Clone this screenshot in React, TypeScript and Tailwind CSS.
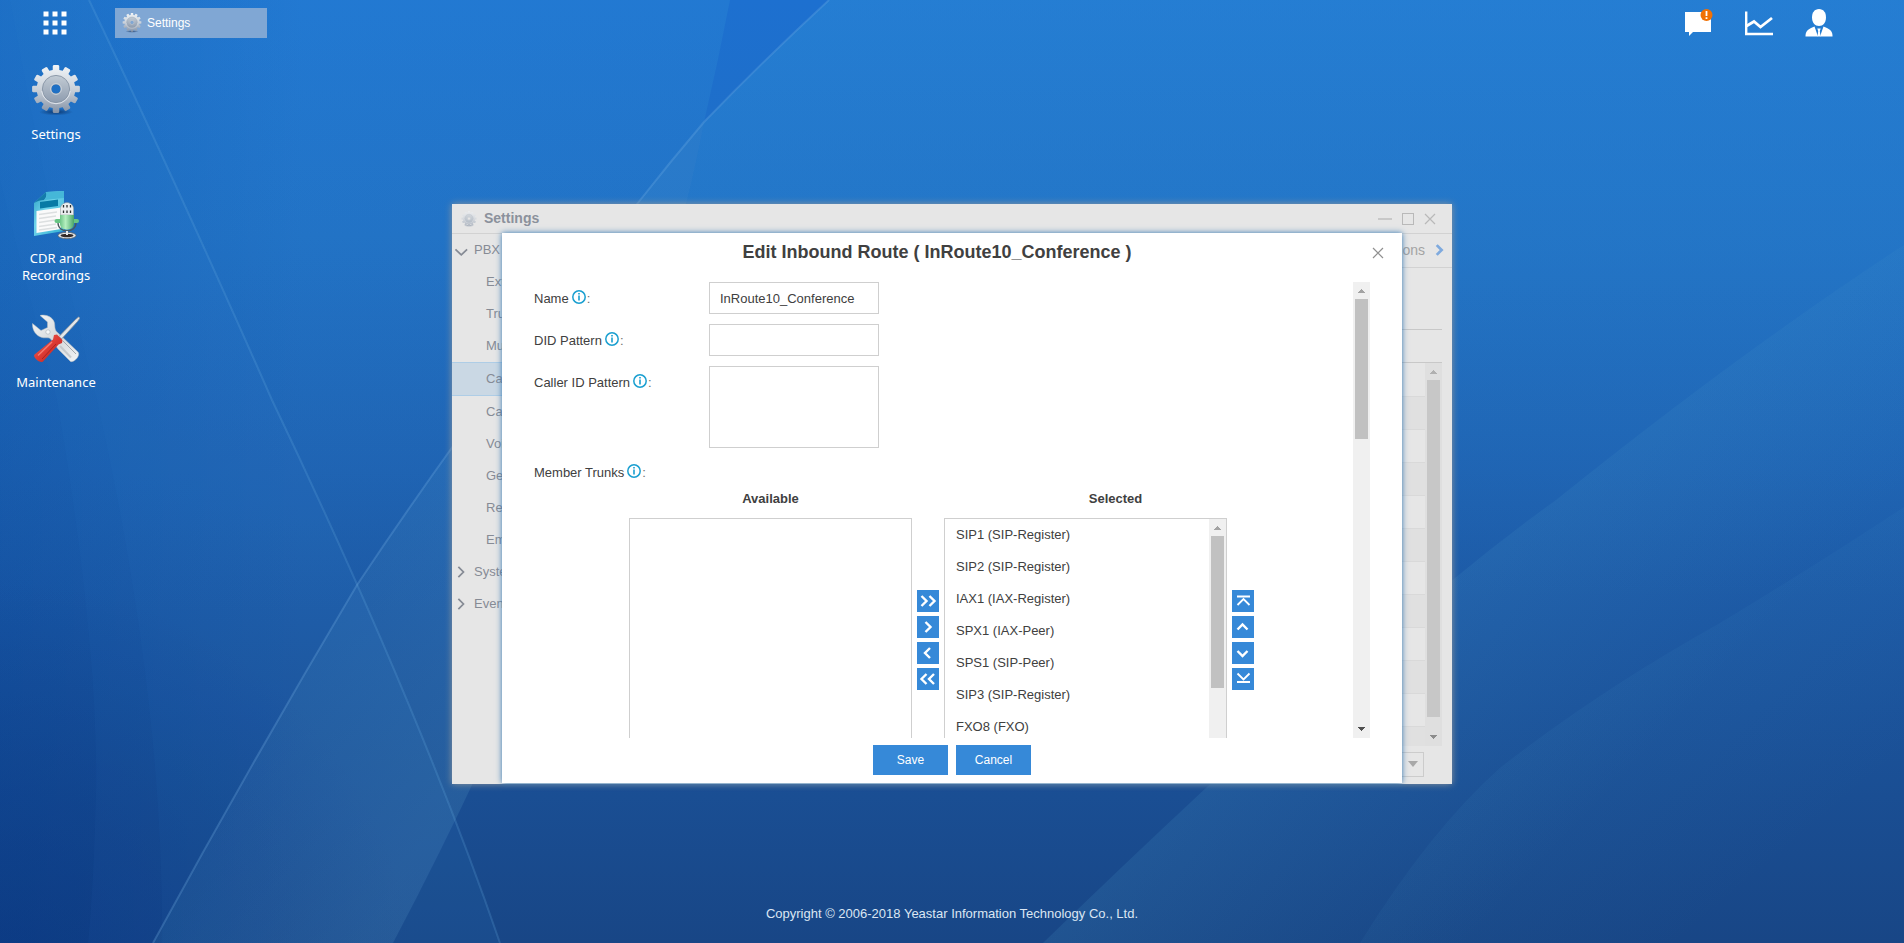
import React, { useId } from "react";

const GEAR_TEETH = 12;

function gearOutline(): string {
  const points: string[] = [];
  const step = (Math.PI * 2) / GEAR_TEETH;
  const at = (radius: number, angle: number) =>
    `${(radius * Math.sin(angle)).toFixed(2)} ${(-radius * Math.cos(angle)).toFixed(2)}`;
  for (let i = 0; i < GEAR_TEETH; i++) {
    const a = i * step;
    points.push(at(19.4, a - 0.17), at(23.2, a - 0.14), at(24, a - 0.1));
    points.push(at(24, a + 0.1), at(23.2, a + 0.14), at(19.4, a + 0.17));
  }
  return `M${points.join("L")}Z`;
}

const GEAR_PATH = gearOutline();
const HOLE = "M5 0A5 5 0 1 0 -5 0A5 5 0 1 0 5 0Z";

function GearIcon({ className }: { className: string }) {
  const id = useId();
  return (
    <svg viewBox="-24 -24 48 51" className={className} aria-hidden="true">
      <defs>
        <linearGradient id={`${id}a`} gradientUnits="userSpaceOnUse" x1="0" y1="-24" x2="0" y2="24">
          <stop offset="0" stopColor="#f1f4f7" />
          <stop offset="0.5" stopColor="#cbd2da" />
          <stop offset="1" stopColor="#8492a6" />
        </linearGradient>
        <linearGradient id={`${id}b`} gradientUnits="userSpaceOnUse" x1="0" y1="-14" x2="0" y2="14">
          <stop offset="0" stopColor="#c3ccd5" />
          <stop offset="1" stopColor="#8d9bae" />
        </linearGradient>
        <radialGradient id={`${id}c`}>
          <stop offset="0" stopColor="#052350" stopOpacity="0.7" />
          <stop offset="1" stopColor="#052350" stopOpacity="0" />
        </radialGradient>
      </defs>
      <ellipse cx="0" cy="23" rx="17" ry="3.5" fill={`url(#${id}c)`} />
      <path d={GEAR_PATH + HOLE} fillRule="evenodd" fill={`url(#${id}a)`} />
      <path d={"M13.6 0A13.6 13.6 0 1 0 -13.6 0A13.6 13.6 0 1 0 13.6 0Z" + HOLE} fillRule="evenodd" fill={`url(#${id}b)`} stroke="#8794a5" strokeWidth="0.9" />
      <path d="M-14.3 2A14.4 14.4 0 0 0 14.3 2" fill="none" stroke="#e6ebf0" strokeWidth="0.9" />
      <circle r="5.4" fill="none" stroke="#dbe1e7" strokeWidth="0.8" />
    </svg>
  );
}

function RecordingsIcon() {
  return (
    <svg viewBox="0 0 48 50" className="h-[50px] w-12" aria-hidden="true">
      <defs>
        <linearGradient id="page" x1="0" y1="0" x2="1" y2="1">
          <stop offset="0" stopColor="#2b9fc6" />
          <stop offset="0.4" stopColor="#6fd3ea" />
          <stop offset="1" stopColor="#2fb0d2" />
        </linearGradient>
        <linearGradient id="mic" x1="0" y1="0" x2="1" y2="0">
          <stop offset="0" stopColor="#6fc588" />
          <stop offset="0.4" stopColor="#b5efbf" />
          <stop offset="1" stopColor="#4aa568" />
        </linearGradient>
      </defs>
      <path d="M2 13L14 2L32 1V41L2 46Z" fill="url(#page)" />
      <path d="M2 13L14 2C15 5 14 8 12 10C9 10 5 11 2 13Z" fill="#147bab" />
      <path d="M14 2L32 1V8L12 10C15 8 15 5 14 2Z" fill="#45b7d8" />
      <path d="M8 12L26 9.500V16L8 18.500Z" fill="#087aa5" />
      <path d="M4.500 21L29 17.500V39L4.500 43Z" fill="#fafafa" />
      <path d="M7 24.500L25 22M7 28.500L24 26M7 32.500L23 30M7 36.500L24 34M7 40L25 37.500" stroke="#dcdfe0" strokeWidth="1.400" />
      <ellipse cx="35" cy="45.500" rx="9" ry="3.200" fill="#e9ebec" stroke="#5c6266" strokeWidth="0.800" />
      <ellipse cx="35" cy="45.500" rx="6.500" ry="1.800" fill="#332a28" />
      <path d="M26 33C26 43.500 44 43.500 44 33" fill="none" stroke="#4b585c" strokeWidth="1.300" />
      <path d="M35 41V45" stroke="#e9ebec" strokeWidth="2" />
      <rect x="22.500" y="29" width="24.500" height="4" rx="2" fill="#67c583" />
      <path d="M28.500 19C28.500 10.500 41.500 10.500 41.500 19V25H28.500Z" fill="#eceff0" stroke="#9aa3a6" strokeWidth="0.600" />
      <path d="M31.500 15V17.500M35 15V17.500M38.500 15V17.500M31.500 20.500V23M35 20.500V23M38.500 20.500V23" stroke="#2c3032" strokeWidth="1.300" />
      <path d="M28 25H42V34C42 41.500 28 41.500 28 34Z" fill="url(#mic)" />
    </svg>
  );
}

function ToolsIcon() {
  return (
    <svg viewBox="0 0 48 50" className="h-[50px] w-12" aria-hidden="true">
      <defs>
        <linearGradient id="steel" x1="0" y1="0" x2="1" y2="1">
          <stop offset="0" stopColor="#f7f8f9" />
          <stop offset="0.5" stopColor="#d4d8db" />
          <stop offset="1" stopColor="#f3f4f5" />
        </linearGradient>
        <linearGradient id="grip" x1="0" y1="0" x2="1" y2="1">
          <stop offset="0" stopColor="#f46a5c" />
          <stop offset="0.500" stopColor="#dc3a33" />
          <stop offset="1" stopColor="#b3211f" />
        </linearGradient>
      </defs>
      <path d="M8 1.500C14 0 21 3 22.500 9C23 12 22.500 14.500 24 17L46 38C49 41.500 42 49 38.500 47.500L26 35L19.500 26C17 22.500 14 24.500 10 23.500C4 22 0 16 0.500 9.500L9 16.500L15.500 13.500L15.500 8Z" fill="url(#steel)" stroke="#b4babf" strokeWidth="0.500" />
      <circle cx="16" cy="18" r="2.200" fill="#f8f9fa" stroke="#aab1b7" strokeWidth="0.600" />
      <path d="M31 27L44 40" stroke="#a4a9ad" strokeWidth="1" />
      <path d="M28 32L39 43.500" stroke="#c6cacd" strokeWidth="2" />
      <path d="M27 22.500L43.500 5.500L46.500 3L48 4L45.500 7.500L29.500 25Z" fill="#e3e6e9" stroke="#868f98" strokeWidth="0.800" />
      <path d="M22 21L25 20.500L30.500 26L30 29L26.500 30.500L11 47.500C8.500 50 0 43 2.500 40.500L21 25.500Z" fill="url(#grip)" />
      <path d="M20 28L6 41.500" stroke="#f77c70" strokeWidth="1.400" />
      <path d="M24 30L10 45" stroke="#a8241f" strokeWidth="1" />
    </svg>
  );
}

function Wallpaper() {
  return (
    <svg viewBox="0 0 1904 943" preserveAspectRatio="none" className="absolute inset-0 h-full w-full" aria-hidden="true">
      <defs>
        <linearGradient id="sky" x1="0" y1="0" x2="0" y2="1">
          <stop offset="0" stopColor="#1d70d0" />
          <stop offset="0.25" stopColor="#1f6dc3" />
          <stop offset="0.5" stopColor="#1e61b1" />
          <stop offset="0.75" stopColor="#1b539b" />
          <stop offset="1" stopColor="#184686" />
        </linearGradient>
        <linearGradient id="shade" x1="0" y1="0" x2="1" y2="0">
          <stop offset="0" stopColor="#004099" stopOpacity="0.26" />
          <stop offset="0.16" stopColor="#004099" stopOpacity="0" />
        </linearGradient>
        <radialGradient id="corner" gradientUnits="userSpaceOnUse" cx="0" cy="1000" r="420">
          <stop offset="0" stopColor="#05307c" stopOpacity="0.5" />
          <stop offset="1" stopColor="#05307c" stopOpacity="0" />
        </radialGradient>
        <linearGradient id="left" gradientUnits="userSpaceOnUse" x1="450" y1="790" x2="180" y2="640">
          <stop offset="0" stopColor="#5a9fc8" stopOpacity="0.19" />
          <stop offset="1" stopColor="#5a9fc8" stopOpacity="0.05" />
        </linearGradient>
        <linearGradient id="leftTop" gradientUnits="userSpaceOnUse" x1="0" y1="0" x2="0" y2="620">
          <stop offset="0" stopColor="#3aa2da" stopOpacity="0.18" />
          <stop offset="1" stopColor="#3aa2da" stopOpacity="0" />
        </linearGradient>
        <linearGradient id="top" gradientUnits="userSpaceOnUse" x1="0" y1="0" x2="0" y2="600">
          <stop offset="0" stopColor="#3aa2da" stopOpacity="0.27" />
          <stop offset="1" stopColor="#3aa2da" stopOpacity="0" />
        </linearGradient>
        <linearGradient id="right" gradientUnits="userSpaceOnUse" x1="1290" y1="690" x2="1510" y2="900">
          <stop offset="0" stopColor="#4f9fcb" stopOpacity="0.15" />
          <stop offset="1" stopColor="#4f9fcb" stopOpacity="0" />
        </linearGradient>
        <linearGradient id="right2" gradientUnits="userSpaceOnUse" x1="1600" y1="690" x2="1760" y2="880">
          <stop offset="0" stopColor="#4fa3cf" stopOpacity="0.07" />
          <stop offset="1" stopColor="#4fa3cf" stopOpacity="0" />
        </linearGradient>
      </defs>
      <rect width="1904" height="943" fill="url(#sky)" />
      <rect width="1904" height="943" fill="url(#shade)" />
      <rect width="600" height="943" fill="url(#corner)" />
      <path d="M829 0Q766 58 704 122Q697 160 686 203L620 600H1904V0Z" fill="url(#top)" />
      <path d="M0 0H730Q718 62 704 122Q697 160 686 203L560 620H0Z" fill="url(#leftTop)" />
      <path d="M704 122Q670 162 637 204H686Q697 160 704 122Z" fill="#5aa5cf" fillOpacity="0.13" />
      <path d="M637 204Q480 400 357 585Q250 765 153 943H393Q590 570 686 203Z" fill="url(#left)" />
      <path d="M1043 943Q1120 868 1207 787Q1330 680 1455 578Q1506 536 1556 500Q1740 352 1904 245V943Z" fill="url(#right)" />
      <path d="M1360 943Q1430 830 1501 767Q1600 690 1720 623Q1824 560 1904 507V943Z" fill="url(#right2)" />
      <path d="M57 400Q98 640 96 790Q94 880 88 943H500Q420 710 272 400Q175 180 89 0H0V180Q30 300 57 400Z" fill="#3a8fd0" fillOpacity="0.05" />
      <path d="M10 0Q50 220 97 400Q164 700 162 943H500Q420 710 272 400Q175 180 89 0Z" fill="#3a8fd0" fillOpacity="0.05" />
      <path d="M89 0Q175 180 272 400Q420 710 500 943" fill="none" stroke="#6fb0e4" strokeOpacity="0.22" strokeWidth="2" />
      <path d="M829 0Q766 58 704 122Q670 162 637 204Q480 400 357 585Q250 765 153 943" fill="none" stroke="#7ab6e6" strokeOpacity="0.26" strokeWidth="2" />
    </svg>
  );
}

function Chevron({ d, className }: { d: string; className: string }) {
  return (
    <svg viewBox="0 0 22 22" className={className} fill="none" stroke="currentColor" aria-hidden="true">
      <path d={d} />
    </svg>
  );
}

function CloseMark({ className }: { className: string }) {
  return (
    <svg viewBox="0 0 12 12" className={className} fill="none" stroke="currentColor" strokeWidth="1.200" aria-hidden="true">
      <path d="M1 1L11 11M11 1L1 11" />
    </svg>
  );
}

function ScrollArrow({ down = false, className }: { down?: boolean; className: string }) {
  return (
    <svg viewBox="0 0 17 17" className={`h-[17px] w-[17px] shrink-0 ${className}`} fill="currentColor" shapeRendering="crispEdges" aria-hidden="true">
      <path d={down ? "M5 6H12L8.500 10Z" : "M5 11H12L8.500 7Z"} />
    </svg>
  );
}

function InfoIcon() {
  return (
    <svg viewBox="0 0 14 14" className="mb-1 ml-[3px] h-[14px] w-[14px]" aria-hidden="true">
      <circle cx="7" cy="7" r="6.200" fill="#fff" stroke="#1a9fd0" strokeWidth="1.500" />
      <path d="M7 3V4.600M7 5.600V10.600" stroke="#1a9fd0" strokeWidth="1.600" />
    </svg>
  );
}

function FieldLabel({ htmlFor, children }: { htmlFor: string; children: React.ReactNode }) {
  return (
    <label htmlFor={htmlFor} className="flex h-[34px] w-[175px] shrink-0 items-center">
      {children}
      <InfoIcon />
      <span className="ml-px text-[#707070]">:</span>
    </label>
  );
}

function MoveButton({ label, d, thin = false }: { label: string; d: string; thin?: boolean }) {
  return (
    <button type="button" aria-label={label} className="block h-[22px] w-[22px] bg-[#3689d8] text-white">
      <Chevron d={d} className={thin ? "h-full w-full stroke-[1.8px]" : "h-full w-full stroke-[2.4px]"} />
    </button>
  );
}

const navItems = [
  { name: "Ext" },
  { name: "Trunks" },
  { name: "Multi" },
  { name: "Call", active: true },
  { name: "Calls" },
  { name: "Voice" },
  { name: "General" },
  { name: "Rec" },
  { name: "Emer" },
];
const trunks = ["SIP1 (SIP-Register)", "SIP2 (SIP-Register)", "IAX1 (IAX-Register)", "SPX1 (IAX-Peer)", "SPS1 (SIP-Peer)", "SIP3 (SIP-Register)", "FXO8 (FXO)"];
const gridRows = Array.from({ length: 12 }, (_, i) => i);

function TopBar() {
  return (
    <header className="flex h-[46px] items-center pr-[71px] pl-[43px] text-white">
      <button type="button" aria-label="Main menu" className="h-6 w-6">
        <svg viewBox="0 0 24 24" fill="currentColor" className="h-full w-full">
          {[0, 9, 18].map((x) => [0, 9, 18].map((y) => <rect key={`${x}-${y}`} x={x + 0.5} y={y + 0.5} width="5" height="5" />))}
        </svg>
      </button>
      <button type="button" className="ml-12 flex h-[30px] w-[152px] items-center bg-[#80a7d4] pl-[7px] text-[12px]">
        <GearIcon className="mr-[5px] h-5 w-5" />
        Settings
      </button>
      <div className="ml-auto flex items-center gap-8">
        <button type="button" aria-label="Notifications" className="h-7 w-7">
          <svg viewBox="0 0 28 28" className="h-full w-full">
            <path d="M0 3H26V23H8L4 27V23H0Z" fill="#fff" />
            <circle cx="21.500" cy="6" r="6" fill="#f07106" />
            <path d="M21.500 2V7M21.500 8.300V10" stroke="#fff" strokeWidth="1.800" />
          </svg>
        </button>
        <button type="button" aria-label="Resource monitor" className="h-7 w-7">
          <svg viewBox="0 0 28 28" className="h-full w-full" fill="none" stroke="#fff">
            <path d="M1.200 2.500V25H28" strokeWidth="2.400" />
            <path d="M1.500 17L9 12.500L15.500 18L27 9" strokeWidth="2.800" />
          </svg>
        </button>
        <button type="button" aria-label="Account" className="h-7 w-7">
          <svg viewBox="0 0 28 28" className="h-full w-full" fill="#fff">
            <path d="M14 0C18.500 0 21 3.500 21 8.500C21 13.500 18 17 14 17S7 13.500 7 8.500C7 3.500 9.500 0 14 0Z" />
            <path d="M9.500 17.500L13 27.500H0.500C0.500 22 2.500 20.500 9.500 17.500Z" />
            <path d="M18.500 17.500L15 27.500H27.500C27.500 22 25.500 20.500 18.500 17.500Z" />
            <path d="M12.300 19.500H15.700L14.800 22L15.500 27.500H12.500L13.200 22Z" />
          </svg>
        </button>
      </div>
    </header>
  );
}

function Shortcuts() {
  const items = [
    { name: "Settings", icon: <GearIcon className="h-[51px] w-12" /> },
    { name: "CDR and Recordings", icon: <RecordingsIcon /> },
    { name: "Maintenance", icon: <ToolsIcon /> },
  ];
  return (
    <nav className="flex w-[112px] flex-col pt-[19px] font-['Noto_Sans','Open_Sans',sans-serif] text-[13px] leading-[17px] text-white">
      {items.map((item) => (
        <a key={item.name} href="#" className="flex h-[124px] flex-col items-center px-3 text-center">
          <span className="mb-[10px] flex h-[51px] items-center">{item.icon}</span>
          {item.name}
        </a>
      ))}
    </nav>
  );
}

function EditDialog() {
  return (
    <section role="dialog" aria-labelledby="dialog-title" className="absolute top-[29px] left-[50px] flex h-[550px] w-[900px] flex-col bg-white text-[#404040] shadow-[0_0_6px_#2f74b0]">
      <div className="flex h-[49px] shrink-0 items-start pr-[18px]">
        <h2 id="dialog-title" className="grow pt-[7px] text-center text-[18px] leading-6 font-bold">
          Edit Inbound Route ( InRoute10_Conference )
        </h2>
        <button type="button" aria-label="Close dialog" className="mt-[14px] text-[#909090]">
          <CloseMark className="h-3 w-3" />
        </button>
      </div>
      <div className="mx-8 flex h-[456px] shrink-0 overflow-hidden">
        <form className="min-w-0 grow">
          <div className="mb-2 flex h-[34px]">
            <FieldLabel htmlFor="name">Name</FieldLabel>
            <input id="name" defaultValue="InRoute10_Conference" className="h-8 w-[170px] border border-[#cfcfcf] px-[10px] outline-none" />
          </div>
          <div className="mb-2 flex h-[34px]">
            <FieldLabel htmlFor="did">DID Pattern</FieldLabel>
            <input id="did" className="h-8 w-[170px] border border-[#cfcfcf] px-[10px] outline-none" />
          </div>
          <div className="mb-2 flex">
            <FieldLabel htmlFor="caller">Caller ID Pattern</FieldLabel>
            <textarea id="caller" className="h-[82px] w-[170px] resize-none border border-[#cfcfcf] px-[10px] outline-none" />
          </div>
          <FieldLabel htmlFor="trunks">Member Trunks</FieldLabel>
          <div className="ml-[95px] grid grid-cols-[283px_32px_343px]">
            <h3 className="mb-[10px] text-center leading-[18px] font-bold">Available</h3>
            <span />
            <h3 className="mb-[10px] text-center leading-[18px] font-bold">Selected</h3>
            <ul aria-label="Available" className="h-[244px] border border-[#cfcfcf]" />
            <div className="flex flex-col items-center justify-center gap-1">
              <MoveButton label="Add all" d="M4.500 6L9.500 11L4.500 16M12.500 6L17.500 11L12.500 16" />
              <MoveButton label="Add" d="M8.500 6L13.500 11L8.500 16" />
              <MoveButton label="Remove" d="M13 6L8 11L13 16" />
              <MoveButton label="Remove all" d="M9.500 6L4.500 11L9.500 16M17 6L12 11L17 16" />
            </div>
            <div className="flex items-center gap-[5px]">
              <div className="flex h-[244px] w-[283px] border border-[#cfcfcf]">
                <ul id="trunks" className="grow pl-[11px] leading-8">
                  {trunks.map((trunk) => (
                    <li key={trunk}>{trunk}</li>
                  ))}
                </ul>
                <div className="w-[17px] bg-[#f0f0f0]">
                  <ScrollArrow className="text-[#a3a3a3]" />
                  <div className="mx-auto h-[152px] w-[13px] bg-[#c1c1c1]" />
                </div>
              </div>
              <div className="flex flex-col gap-1">
                <MoveButton thin label="Move to top" d="M5 6.500H18M5.500 15L11.500 9L17.500 15" />
                <MoveButton label="Move up" d="M5.500 13.500L10.500 8.500L15.500 13.500" />
                <MoveButton label="Move down" d="M5.500 9L10.500 14L15.500 9" />
                <MoveButton thin label="Move to bottom" d="M5 14H18M5.500 5.500L11.500 11.500L17.500 5.500" />
              </div>
            </div>
          </div>
        </form>
        <div className="flex w-[17px] shrink-0 flex-col bg-[#f0f0f0]">
          <ScrollArrow className="text-[#a3a3a3]" />
          <div className="mx-auto h-[140px] w-[13px] bg-[#c1c1c1]" />
          <ScrollArrow down className="mt-auto text-[#505050]" />
        </div>
      </div>
      <div className="mt-[7px] flex justify-center gap-2 text-[12px] text-white">
        <button type="button" className="h-[30px] w-[75px] bg-[#3689d8]">Save</button>
        <button type="button" className="h-[30px] w-[75px] bg-[#3689d8]">Cancel</button>
      </div>
    </section>
  );
}

function SettingsWindow() {
  return (
    <main className="absolute top-[204px] left-1/2 flex h-[580px] w-[1000px] -translate-x-1/2 flex-col bg-[#e6e6e6] text-[13px] text-[#868b95] shadow-[0_0_7px_#8f979c]">
      <div className="flex h-[30px] shrink-0 items-center border-b border-[#d2d2d2] pr-4 pl-[9px]">
        <GearIcon className="mr-[7px] h-4 w-4 opacity-55" />
        <h1 className="text-[14px] font-bold text-[#8b919c]">Settings</h1>
        <div className="ml-auto flex items-center gap-[10px] text-[#b9b9b9]">
          <button type="button" aria-label="Minimize" className="h-[2px] w-[14px] bg-[#c8c8c8]" />
          <button type="button" aria-label="Maximize" className="h-3 w-3 border border-[#b9b9b9]" />
          <button type="button" aria-label="Close">
            <CloseMark className="h-3 w-3" />
          </button>
        </div>
      </div>
      <div className="flex min-h-0 grow">
        <nav className="w-[200px] shrink-0 leading-8 whitespace-nowrap">
          <a href="#" className="flex h-8 items-center pl-[2px]">
            <Chevron d="M2 7.500L10 15L18 7.500" className="mt-1 h-4 w-4 shrink-0 stroke-[2.4px]" />
            <span className="ml-1">PBX</span>
          </a>
          {navItems.map((item) => (
            <a key={item.name} href="#" className={item.active ? "block border-y border-[#aecde6] bg-[#cad8e4] pl-[34px]" : "block pl-[34px]"}>
              {item.name}
            </a>
          ))}
          {["System", "Event"].map((item) => (
            <a key={item} href="#" className="flex h-8 items-center pl-[2px]">
              <Chevron d="M6 4L13 11L6 18" className="h-4 w-4 shrink-0 stroke-[2.4px]" />
              <span className="ml-1">{item}</span>
            </a>
          ))}
        </nav>
        <div className="flex min-w-0 grow flex-col">
          <div className="flex h-[34px] shrink-0 items-center justify-end gap-[9px] border-b border-[#d2d2d2] pr-[6px] text-[14px] text-[#a3a3a3]">
            <a href="#">Time Conditions</a>
            <Chevron d="M5 2L14 11L5 20" className="mb-[2px] h-4 w-3 stroke-[5px] text-[#7faade]" />
          </div>
          <div className="mr-[10px] flex min-h-0 grow flex-col">
            <div className="h-[62px] shrink-0 border-b border-[#c8c8c8]" />
            <div className="h-[33px] shrink-0 border-b border-[#c8c8c8]" />
            <div className="flex h-[383px] shrink-0 overflow-hidden">
              <div className="grow">
                {gridRows.map((row) => (
                  <div key={row} className="h-[33px] border-t border-[#d9d9d9] odd:bg-[#e6e6e6] even:bg-[#e0e0e0] first:border-t-0" />
                ))}
              </div>
              <div className="flex w-[17px] flex-col bg-[#dfdfdf]">
                <ScrollArrow className="text-[#b0b0b0]" />
                <div className="mx-auto h-[337px] w-[13px] bg-[#c7c7c7]" />
                <ScrollArrow down className="mt-auto text-[#8c8c8c]" />
              </div>
            </div>
            <div className="relative mt-[6px] mr-[18px] ml-auto">
              <select aria-label="Rows per page" className="block h-[25px] w-[60px] appearance-none border border-[#cccccc] bg-[#e6e6e6] pl-2">
                <option>10</option>
              </select>
              <svg viewBox="0 0 10 6" className="pointer-events-none absolute top-[9px] right-[6px] h-[6px] w-[10px]" fill="#a8a8a8" aria-hidden="true">
                <path d="M0 0H10L5 6Z" />
              </svg>
            </div>
          </div>
        </div>
      </div>
      <EditDialog />
    </main>
  );
}

export default function App() {
  return (
    <div className="relative flex min-h-screen flex-col overflow-hidden bg-[#1d62b2] font-['Liberation_Sans',Arial,sans-serif] text-[13px]">
      <Wallpaper />
      <div className="relative flex grow flex-col">
        <TopBar />
        <Shortcuts />
        <footer className="mt-auto pb-5 text-center leading-[18px] text-[#dbe6f3]">
          Copyright © 2006-2018 Yeastar Information Technology Co., Ltd.
        </footer>
      </div>
      <SettingsWindow />
    </div>
  );
}
